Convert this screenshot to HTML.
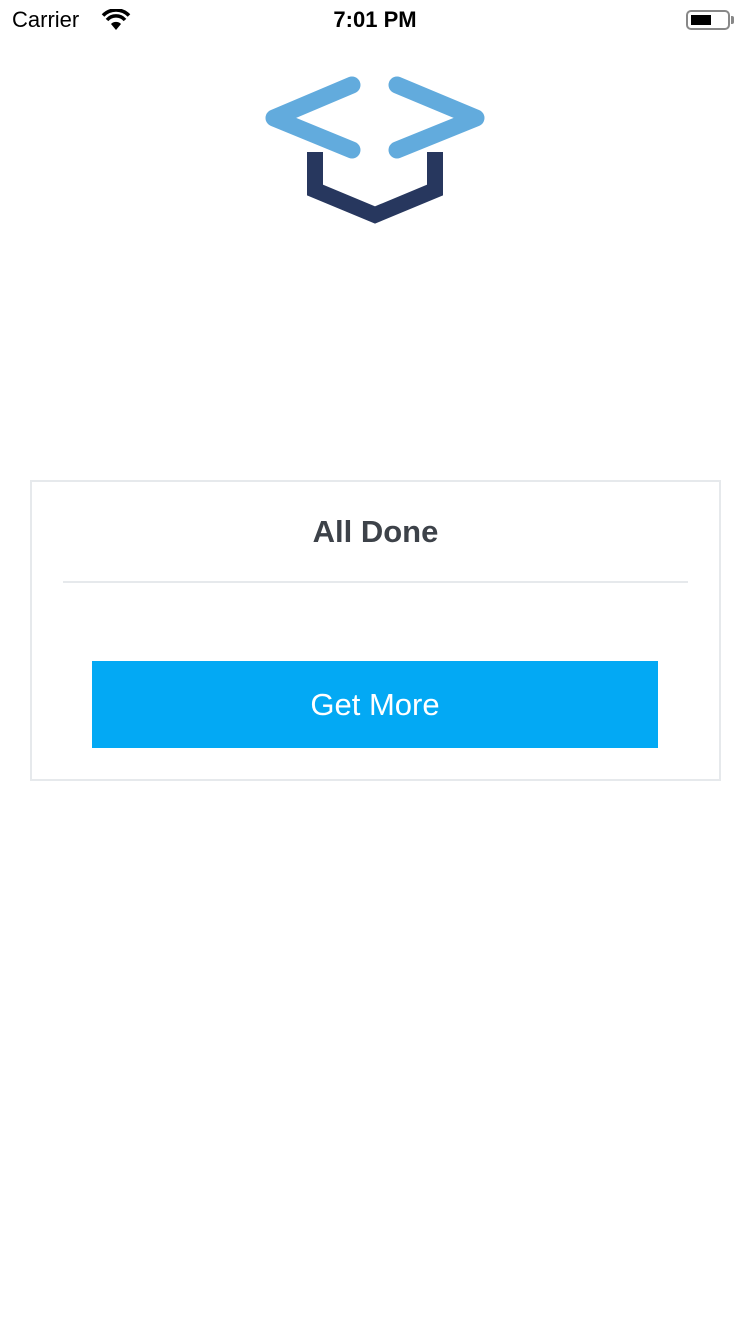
<!DOCTYPE html>
<html><head><style>
body{margin:0;width:750px;height:1334px;background:#fff;font-family:"Liberation Sans",sans-serif;position:relative;overflow:hidden}
.sb{position:absolute;top:0;left:0;width:750px;height:40px;font-size:22px;color:#000}
.card{position:absolute;left:30px;top:480px;width:687px;height:297px;border:2px solid #e6e9ec;background:#fff}
.title{position:absolute;top:32px;width:100%;text-align:center;font-size:31px;font-weight:bold;color:#3d4249}
.line{position:absolute;left:31px;right:31px;top:99px;height:2px;background:#e6e9ec}
.btn{position:absolute;left:60px;top:179px;width:566px;height:87px;background:#03a9f4;color:#fff;font-size:31px;text-align:center;line-height:87px}
</style></head><body>
<div class="sb">
<span style="position:absolute;left:12px;top:7px">Carrier</span>
<svg style="position:absolute;left:101px;top:9px" width="30" height="22" viewBox="0 0 30 22"><path d="M15 21 L10 15 A7 7 0 0 1 20 15 Z" fill="#000"/><path d="M6 11 A12 12 0 0 1 24 11" stroke="#000" stroke-width="3.5" fill="none"/><path d="M2 6.5 A18 18 0 0 1 28 6.5" stroke="#000" stroke-width="3.5" fill="none"/></svg>
<span style="position:absolute;left:0;width:750px;text-align:center;top:7px;font-weight:bold">7:01 PM</span>
<div style="position:absolute;left:686px;top:10px;width:44px;height:20px;border:2px solid #888;border-radius:5px;box-sizing:border-box"><div style="position:absolute;left:3px;top:3px;width:20px;height:10px;background:#000"></div></div>
<div style="position:absolute;left:731px;top:16px;width:3px;height:8px;background:#888;border-radius:0 2px 2px 0"></div>
</div>
<svg style="position:absolute;left:0;top:0" width="750" height="240">
<g fill="none" stroke-linecap="round" stroke-linejoin="round" stroke="#62abdd" stroke-width="17">
<polyline points="352,85 274,118 352,150"/>
<polyline points="397,85 476,118 397,150"/>
</g>
<polyline points="315,152 315,190 375,215 435,190 435,152" fill="none" stroke="#27375e" stroke-width="16"/>
</svg>
<div class="card">
<div class="title">All Done</div>
<div class="line"></div>
<div class="btn">Get More</div>
</div>
</body></html>
